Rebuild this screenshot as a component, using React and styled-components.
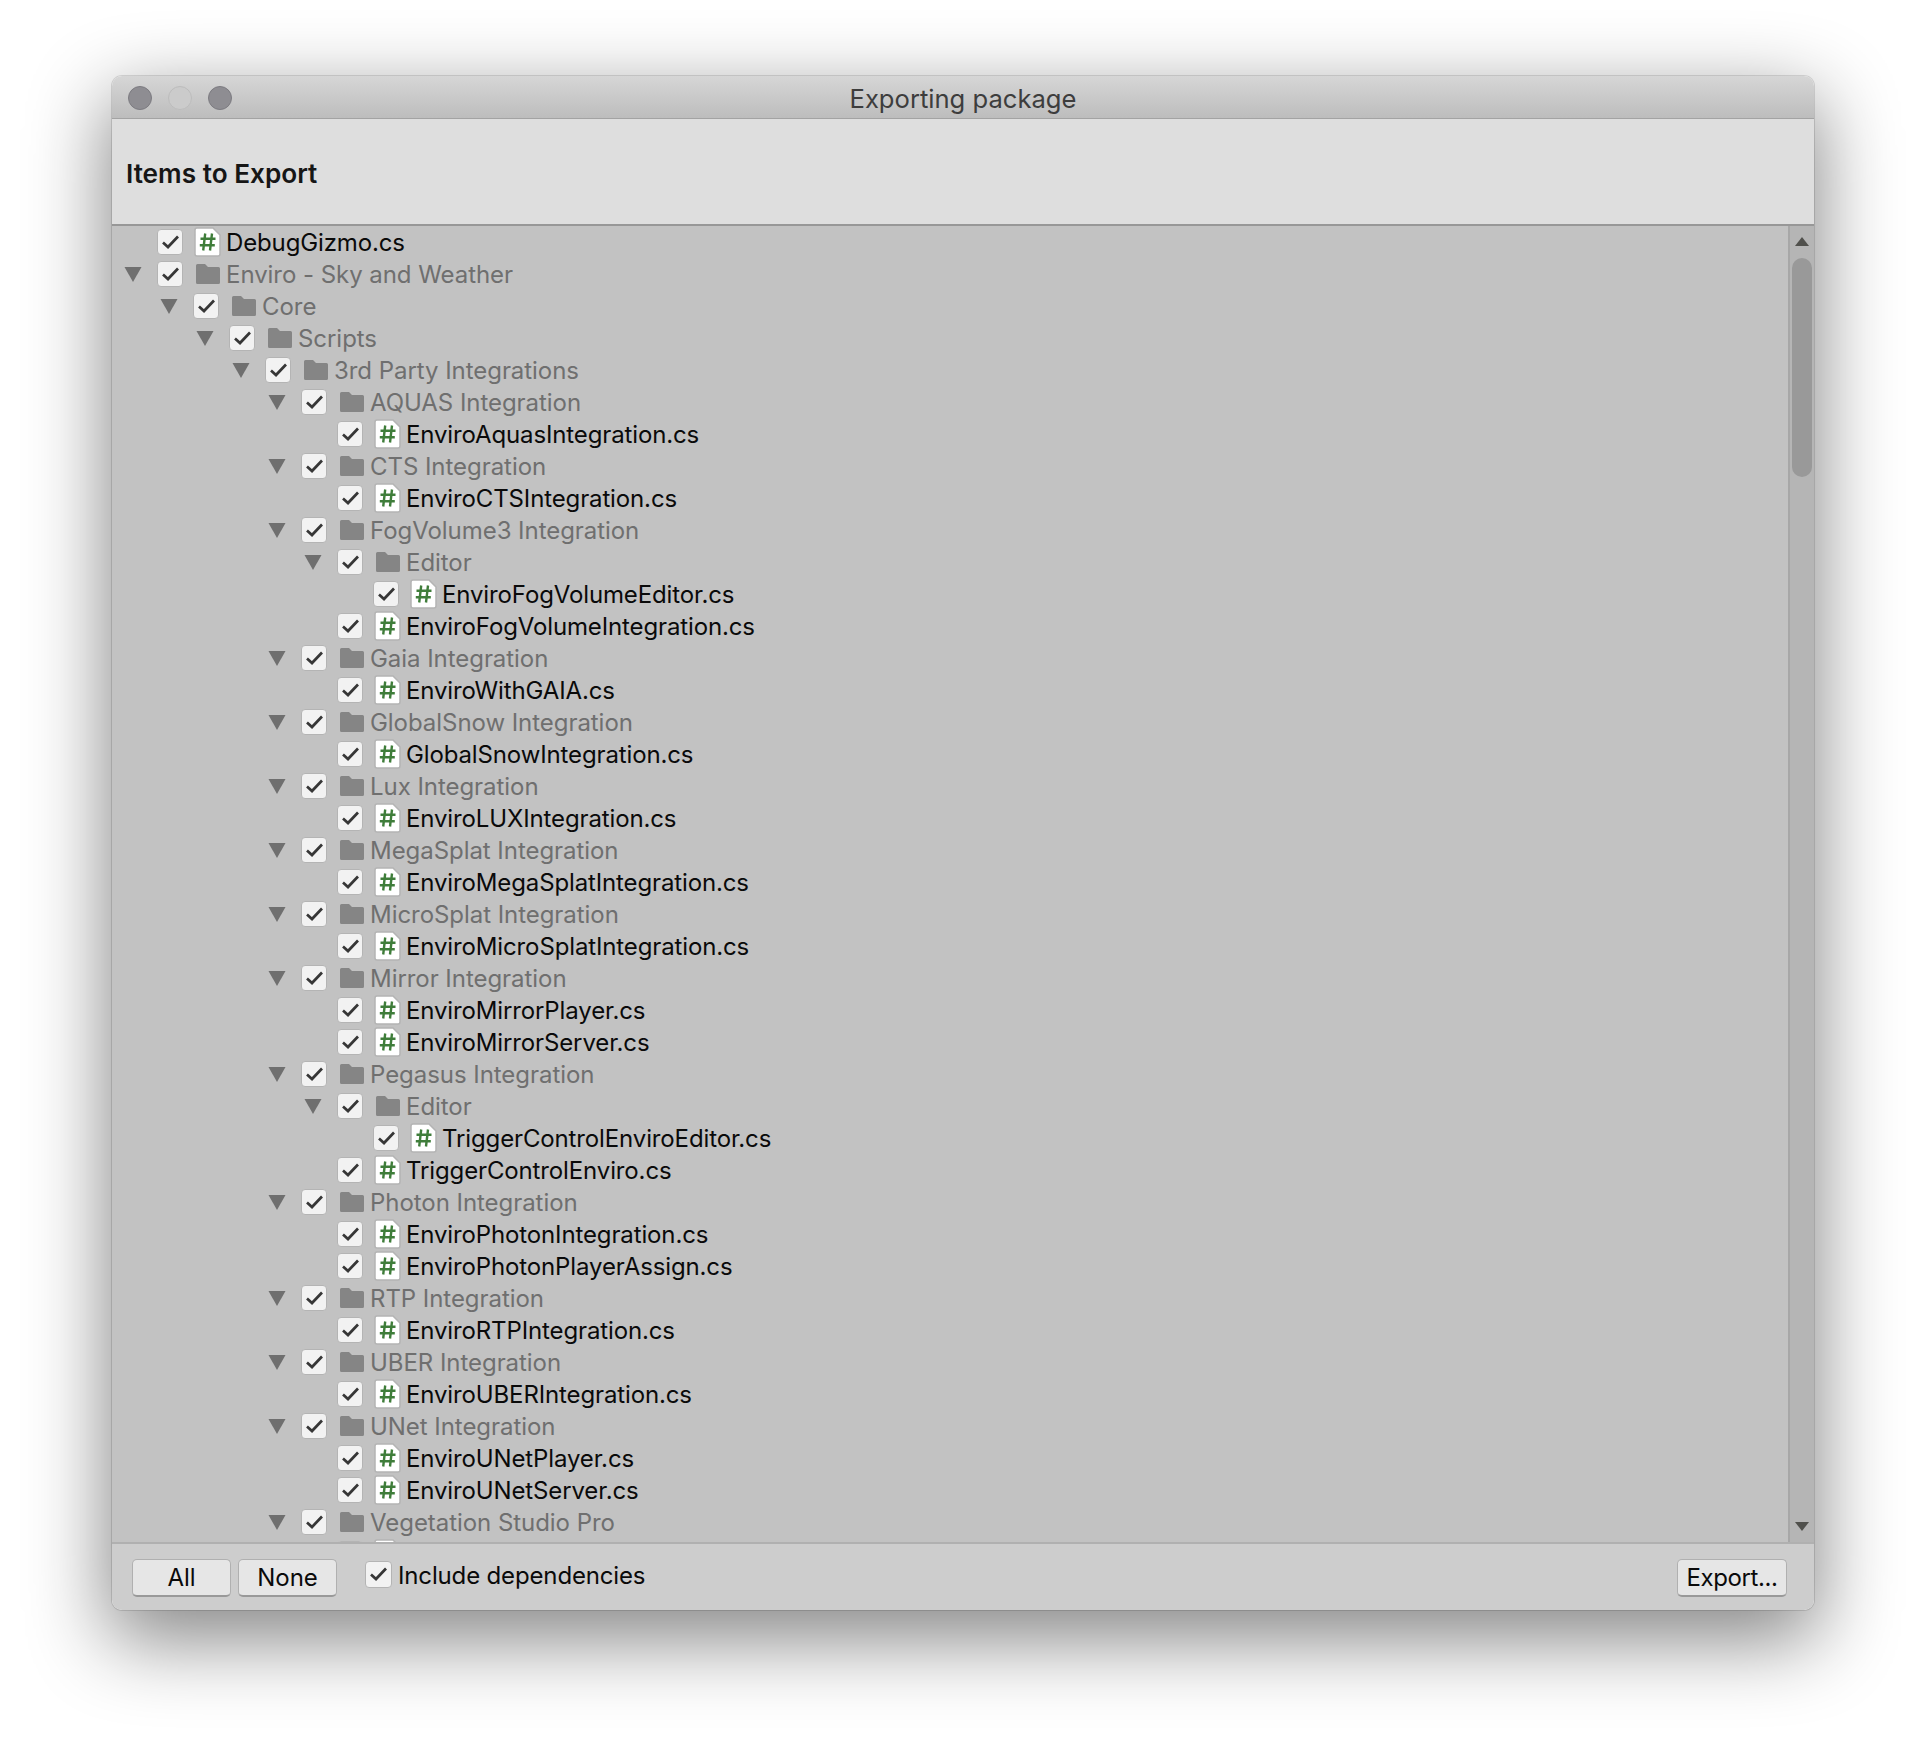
import React from 'react';
import styled, { createGlobalStyle } from 'styled-components';

const GlobalStyle = createGlobalStyle`
  html, body {
    margin: 0;
    background: #ffffff;
  }
  body {
    font-family: Inter, "Noto Sans", sans-serif;
  }
`;

const Page = styled.div`
  width: 1926px;
  height: 1758px;
  padding: 76px 112px 0;
  box-sizing: border-box;
  overflow: hidden;
`;

const Window = styled.div`
  width: 1702px;
  height: 1534px;
  display: flex;
  flex-direction: column;
  border-radius: 10px;
  overflow: hidden;
  box-shadow: 0 26px 80px 4px rgba(0, 0, 0, 0.48), 0 0 0 1px rgba(0, 0, 0, 0.12);
`;

const TitleBar = styled.div`
  height: 43px;
  flex: none;
  position: relative;
  display: flex;
  align-items: center;
  justify-content: center;
  padding-top: 2px;
  box-sizing: border-box;
  background: linear-gradient(#d6d6d6, #bdbdbd);
  border-bottom: 1px solid #a3a3a3;
  font-size: 25.6px;
  color: #3d3d3d;
`;

const Lights = styled.div`
  position: absolute;
  left: 16px;
  top: 10px;
  display: flex;
  gap: 16px;
`;

const Light = styled.span`
  width: 24px;
  height: 24px;
  box-sizing: border-box;
  border-radius: 50%;
  background: ${(p) => (p.$off ? '#cbcbcb' : '#8e8d92')};
  border: 1px solid ${(p) => (p.$off ? '#bcbcbc' : '#7c7b80')};
`;

const Header = styled.div`
  height: 107px;
  flex: none;
  display: flex;
  align-items: center;
  padding: 3px 0 0 14px;
  box-sizing: border-box;
  background: #dedede;
  border-bottom: 2px solid #979797;
  font-size: 26.2px;
  font-weight: 600;
  color: #161616;
`;

const Body = styled.div`
  flex: 1;
  min-height: 0;
  display: flex;
  background: #c2c2c2;
`;

const Tree = styled.div`
  flex: 1;
  overflow: hidden;
`;

const Row = styled.div`
  height: 32px;
  display: flex;
  align-items: center;
  padding-left: ${(p) => 12 + p.$depth * 36}px;
  font-size: 24px;
  white-space: nowrap;
  letter-spacing: ${(p) => (p.$folder ? '-0.05px' : '-0.13px')};
  color: ${(p) => (p.$folder ? '#6f6f6f' : '#0a0a0a')};
`;

const ArrowSlot = styled.span`
  width: 18px;
  margin: 1px 15px 0 0;
  flex: none;
  display: flex;
`;

const IconSlot = styled.span`
  width: 27px;
  height: 30px;
  margin: 0 5px 0 11px;
  flex: none;
  display: flex;
  align-items: center;
`;

const CheckBox = styled.span`
  width: ${(p) => p.$size || 26}px;
  height: ${(p) => p.$size || 26}px;
  flex: none;
  box-sizing: border-box;
  display: flex;
  align-items: center;
  justify-content: center;
  background: #f2f2f2;
  border: 1.5px solid #b4b4b4;
  border-radius: 4px;
`;

const ScrollBar = styled.div`
  width: 26px;
  flex: none;
  box-sizing: border-box;
  position: relative;
  background: #b5b5b5;
  border-left: 2px solid #a7a7a7;
`;

const ScrollArrow = styled.svg`
  position: absolute;
  left: 5px;
  ${(p) => (p.$down ? 'bottom: 11px;' : 'top: 11px;')}
`;

const Thumb = styled.div`
  position: absolute;
  left: 2px;
  top: 32px;
  width: 20px;
  height: 219px;
  border-radius: 10px;
  background: #999999;
`;

const Footer = styled.div`
  height: 68px;
  flex: none;
  position: relative;
  z-index: 1;
  display: flex;
  align-items: flex-start;
  gap: 7px;
  padding: 15px 27px 0 20px;
  box-sizing: border-box;
  background: #cdcdcd;
  border-top: 2px solid #b0b0b0;
  font-size: 24px;
  color: #0a0a0a;
`;

const Button = styled.button`
  width: ${(p) => p.$width}px;
  height: 38px;
  padding: 0;
  box-sizing: border-box;
  font: inherit;
  letter-spacing: ${(p) => (p.$tight ? '-0.4px' : '0')};
  color: inherit;
  background: #e6e6e6;
  border: 1.5px solid #b0b0b0;
  border-bottom: 2px solid #999999;
  border-radius: 5px;
`;

const Include = styled.label`
  display: flex;
  align-items: center;
  gap: 6px;
  margin: 1px 0 0 21px;
  height: 28px;
  letter-spacing: -0.15px;
`;

const IncludeText = styled.span`
  padding-top: 2px;
`;

const Spacer = styled.div`
  flex: 1;
`;

const tree = [
  [0, 'f', 'DebugGizmo.cs'],
  [0, 'd', 'Enviro - Sky and Weather'],
  [1, 'd', 'Core'],
  [2, 'd', 'Scripts'],
  [3, 'd', '3rd Party Integrations'],
  [4, 'd', 'AQUAS Integration'],
  [5, 'f', 'EnviroAquasIntegration.cs'],
  [4, 'd', 'CTS Integration'],
  [5, 'f', 'EnviroCTSIntegration.cs'],
  [4, 'd', 'FogVolume3 Integration'],
  [5, 'd', 'Editor'],
  [6, 'f', 'EnviroFogVolumeEditor.cs'],
  [5, 'f', 'EnviroFogVolumeIntegration.cs'],
  [4, 'd', 'Gaia Integration'],
  [5, 'f', 'EnviroWithGAIA.cs'],
  [4, 'd', 'GlobalSnow Integration'],
  [5, 'f', 'GlobalSnowIntegration.cs'],
  [4, 'd', 'Lux Integration'],
  [5, 'f', 'EnviroLUXIntegration.cs'],
  [4, 'd', 'MegaSplat Integration'],
  [5, 'f', 'EnviroMegaSplatIntegration.cs'],
  [4, 'd', 'MicroSplat Integration'],
  [5, 'f', 'EnviroMicroSplatIntegration.cs'],
  [4, 'd', 'Mirror Integration'],
  [5, 'f', 'EnviroMirrorPlayer.cs'],
  [5, 'f', 'EnviroMirrorServer.cs'],
  [4, 'd', 'Pegasus Integration'],
  [5, 'd', 'Editor'],
  [6, 'f', 'TriggerControlEnviroEditor.cs'],
  [5, 'f', 'TriggerControlEnviro.cs'],
  [4, 'd', 'Photon Integration'],
  [5, 'f', 'EnviroPhotonIntegration.cs'],
  [5, 'f', 'EnviroPhotonPlayerAssign.cs'],
  [4, 'd', 'RTP Integration'],
  [5, 'f', 'EnviroRTPIntegration.cs'],
  [4, 'd', 'UBER Integration'],
  [5, 'f', 'EnviroUBERIntegration.cs'],
  [4, 'd', 'UNet Integration'],
  [5, 'f', 'EnviroUNetPlayer.cs'],
  [5, 'f', 'EnviroUNetServer.cs'],
  [4, 'd', 'Vegetation Studio Pro'],
  [5, 'f', ''],
];

function Check() {
  return (
    <svg width="17" height="14" viewBox="0 0 17 14">
      <path d="M1 7.5 L6 12 L16 1.5" fill="none" stroke="#363636" strokeWidth="2.7" />
    </svg>
  );
}

function Arrow() {
  return (
    <svg width="18" height="15" viewBox="0 0 18 15">
      <path d="M0.5 0 H17.5 L9 15 Z" fill="#6f6f6f" />
    </svg>
  );
}

function Folder() {
  return (
    <svg width="24" height="20" viewBox="0 0 24 20" style={{ marginLeft: 2 }}>
      <path
        d="M1.5 0 H9 L12 3 H22.5 A1.5 1.5 0 0 1 24 4.5 V18.5 A1.5 1.5 0 0 1 22.5 20 H1.5 A1.5 1.5 0 0 1 0 18.5 V1.5 A1.5 1.5 0 0 1 1.5 0 Z"
        fill="#858585"
      />
    </svg>
  );
}

function ScriptIcon() {
  return (
    <svg width="27" height="30" viewBox="0 0 27 30">
      <path d="M3 1 H19 L26 8 V27 A2 2 0 0 1 24 29 H3 A2 2 0 0 1 1 27 V3 A2 2 0 0 1 3 1 Z" fill="#fff" stroke="#b4b4b4" strokeWidth="1.5" />
      <path
        d="M11.2 6.5 L9.2 23.5 M18 6.5 L16 23.5 M6.5 11.8 H21.5 M5.8 18.2 H20.8"
        fill="none"
        stroke="#3f7d3a"
        strokeWidth="2.4"
      />
    </svg>
  );
}

function TreeRow({ depth, kind, name }) {
  const folder = kind === 'd';
  return (
    <Row $depth={depth} $folder={folder}>
      <ArrowSlot>{folder && <Arrow />}</ArrowSlot>
      <CheckBox>
        <Check />
      </CheckBox>
      <IconSlot>{folder ? <Folder /> : <ScriptIcon />}</IconSlot>
      {name}
    </Row>
  );
}

export default function App() {
  return (
    <Page>
      <GlobalStyle />
      <Window>
        <TitleBar>
          <Lights>
            <Light />
            <Light $off />
            <Light />
          </Lights>
          Exporting package
        </TitleBar>
        <Header>Items to Export</Header>
        <Body>
          <Tree>
            {tree.map(([depth, kind, name], i) => (
              <TreeRow key={i} depth={depth} kind={kind} name={name} />
            ))}
          </Tree>
          <ScrollBar>
            <ScrollArrow width="14" height="9" viewBox="0 0 14 9">
              <path d="M7 0 L14 9 H0 Z" fill="#50504c" />
            </ScrollArrow>
            <Thumb />
            <ScrollArrow $down width="14" height="9" viewBox="0 0 14 9">
              <path d="M0 0 H14 L7 9 Z" fill="#50504c" />
            </ScrollArrow>
          </ScrollBar>
        </Body>
        <Footer>
          <Button $width={99}>All</Button>
          <Button $width={99}>None</Button>
          <Include>
            <CheckBox $size={27}>
              <Check />
            </CheckBox>
            <IncludeText>Include dependencies</IncludeText>
          </Include>
          <Spacer />
          <Button $width={110} $tight>Export...</Button>
        </Footer>
      </Window>
    </Page>
  );
}
